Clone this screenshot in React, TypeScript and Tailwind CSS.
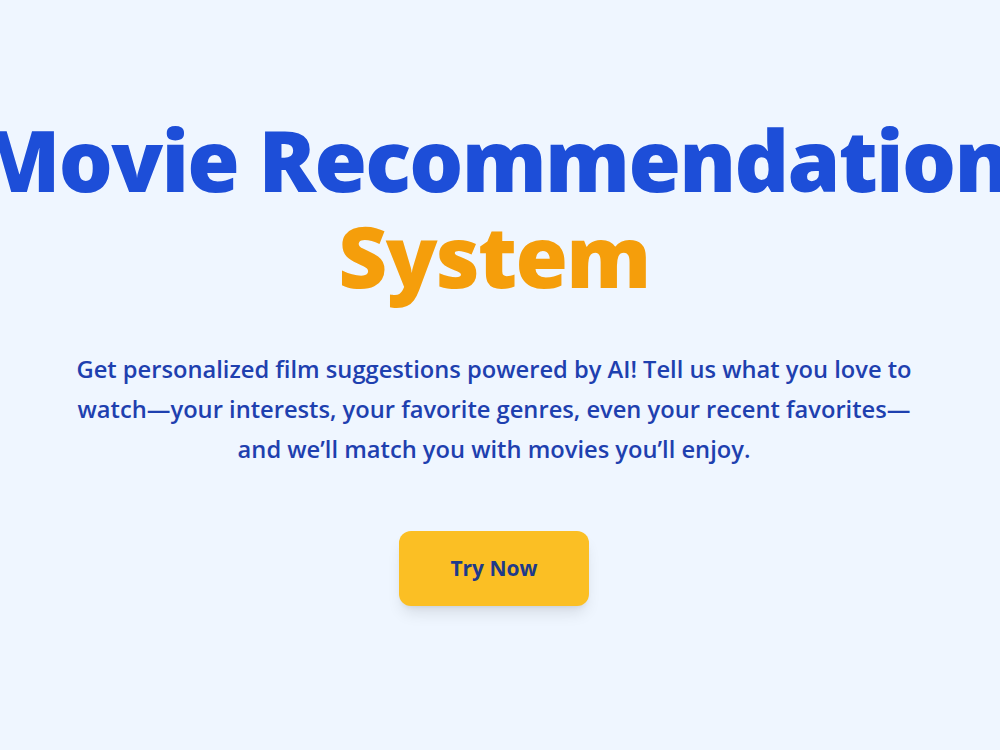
export default function App() {
  return (
    <main className="min-h-screen bg-[#eff6ff] flex flex-col items-center pr-3 text-center font-['Open_Sans',sans-serif] overflow-hidden">
      <h1 className="mt-[111px] text-[85px] leading-[96px] font-extrabold tracking-[-0.02em] text-[#1d4ed8] whitespace-nowrap">
        Movie Recommendation
        <br />
        <span className="text-[#f59e0b]">System</span>
      </h1>
      <p className="mt-[46px] max-w-[860px] text-[23.7px] leading-10 font-semibold text-[#1e40af]">
        Get personalized film suggestions powered by AI! Tell us what you love to watch—your interests, your favorite
        genres, even your recent favorites—and we’ll match you with movies you’ll enjoy.
      </p>
      <button
        type="button"
        className="mt-[62px] w-[190px] h-[75px] rounded-xl bg-[#fbbf24] text-[#1e3a8a] text-[21px] font-bold shadow-lg"
      >
        Try Now
      </button>
    </main>
  );
}
